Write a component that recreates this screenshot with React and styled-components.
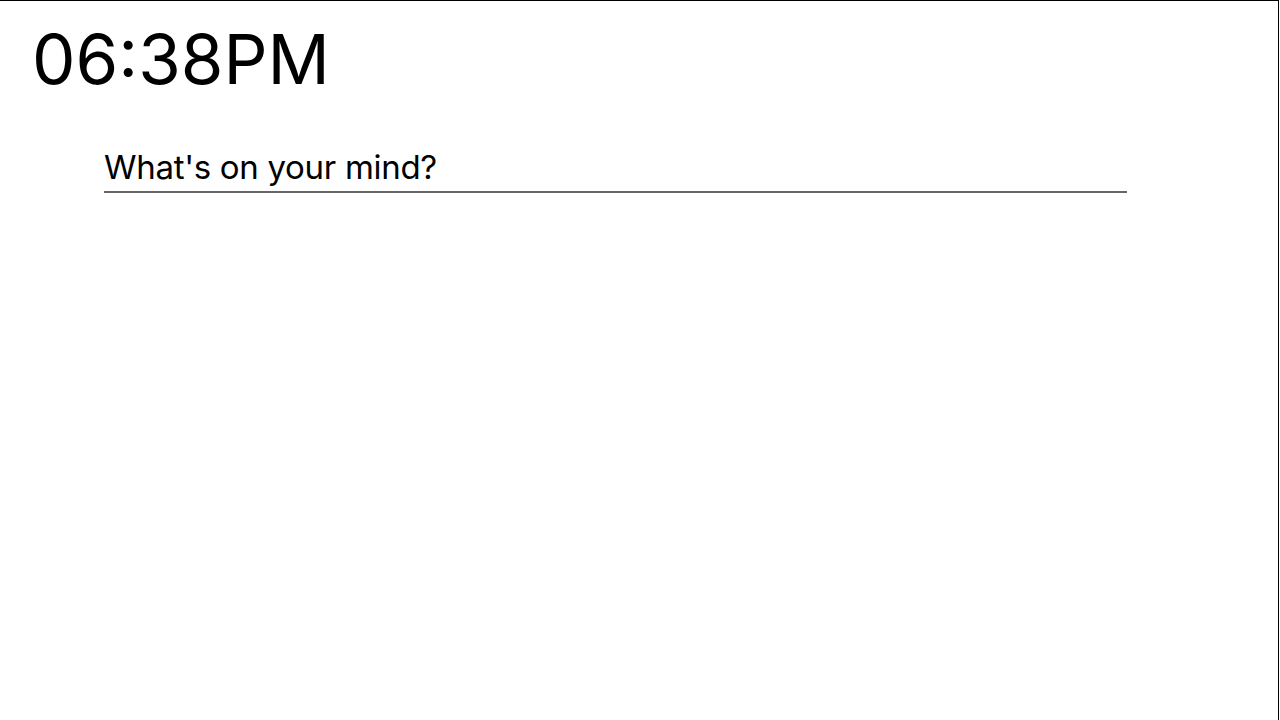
import React from "react";
import styled, { createGlobalStyle } from "styled-components";

const Global = createGlobalStyle`
  html, body { margin: 0; padding: 0; background: #fff; }
  body { font-family: Inter, "Noto Sans", sans-serif; }
`;

const Frame = styled.div`
  box-sizing: border-box;
  width: 1279px;
  height: 720px;
  border-top: 1px solid #000;
  border-right: 1px solid #000;
  display: flex;
  flex-direction: column;
`;

const Clock = styled.div`
  font-family: Inter, sans-serif;
  font-size: 69px;
  line-height: 69px;
  color: #000;
  padding: 24px 0 0 32px;
  letter-spacing: 0;
`;

const Form = styled.div`
  padding: 45px 0 0 104px;
`;

const Input = styled.input`
  display: block;
  box-sizing: border-box;
  width: 1023px;
  height: 54px;
  border: none;
  border-bottom: 2px solid #666;
  outline: none;
  padding: 4px 0 0 0;
  font-family: Inter, sans-serif;
  font-size: 33px;
  letter-spacing: -0.3px;
  color: #000;
  background: transparent;
  &::placeholder { color: #000; opacity: 1; }
`;

export default function App() {
  return (
    <>
      <Global />
      <Frame>
        <Clock>06:38PM</Clock>
        <Form>
          <Input placeholder="What's on your mind?" />
        </Form>
      </Frame>
    </>
  );
}
